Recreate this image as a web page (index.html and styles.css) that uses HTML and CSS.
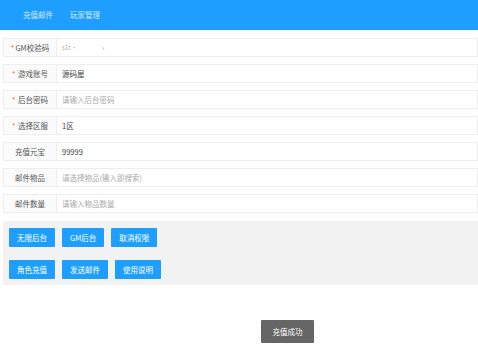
FILE: index.html
```html
<!DOCTYPE html>
<html lang="zh-CN">
<head>
    <meta charset="UTF-8">
    <meta name="viewport" content="width=device-width, initial-scale=1.0">
    <title>GM后台</title>
    <link rel="stylesheet" href="styles.css">
</head>
<body>
    <div class="header">
        <ul class="nav">
            <li>充值邮件</li>
            <li>玩家管理</li>
        </ul>
    </div>

    <form class="gm-form">
        <div class="form-item">
            <label class="form-label"><span class="req">*</span>GM校验码</label>
            <div class="form-input masked">s1c· &nbsp; &nbsp; &nbsp; &nbsp; &nbsp; &nbsp; &nbsp; &nbsp; &nbsp; ı</div>
        </div>
        <div class="form-item">
            <label class="form-label"><span class="req">*</span> 游戏账号</label>
            <div class="form-input">源码屋</div>
        </div>
        <div class="form-item">
            <label class="form-label"><span class="req">*</span> 后台密码</label>
            <div class="form-input placeholder">请输入后台密码</div>
        </div>
        <div class="form-item">
            <label class="form-label"><span class="req">*</span> 选择区服</label>
            <div class="form-input">1区</div>
        </div>
        <div class="form-item">
            <label class="form-label">充值元宝</label>
            <div class="form-input">99999</div>
        </div>
        <div class="form-item">
            <label class="form-label">邮件物品</label>
            <div class="form-input placeholder">请选择物品(输入即搜索)</div>
        </div>
        <div class="form-item">
            <label class="form-label">邮件数量</label>
            <div class="form-input placeholder">请输入物品数量</div>
        </div>

        <div class="btn-panel">
            <div class="btn-row">
                <button type="button" class="btn">无限后台</button>
                <button type="button" class="btn">GM后台</button>
                <button type="button" class="btn">取消权限</button>
            </div>
            <div class="btn-row">
                <button type="button" class="btn">角色充值</button>
                <button type="button" class="btn">发送邮件</button>
                <button type="button" class="btn">使用说明</button>
            </div>
        </div>
    </form>

    <!-- toast message -->
    <div class="toast">充值成功</div>
</body>
</html>
```

FILE: styles.css
```css
body {
    margin: 0;
    font-family: "Noto Sans CJK SC", "Noto Sans", sans-serif;
    font-size: 7.5px;
    color: #333;
    background: #fff;
}

.header {
    height: 30px;
    background-color: #1E9FFF;
}

.nav {
    display: flex;
    gap: 17px;
    margin: 0;
    padding: 0 0 0 23px;
    list-style: none;
}

.nav li {
    line-height: 30px;
    color: rgba(255, 255, 255, 0.8);
}

.gm-form {
    padding: 8px 0 0 3px;
}

.form-item {
    display: flex;
    height: 19px;
    margin-bottom: 7px;
}

.form-label {
    width: 54px;
    box-sizing: border-box;
    border: 1px solid #eee;
    background-color: #fbfbfb;
    text-align: center;
    line-height: 17px;
    color: #555;
}

.req {
    color: #FF5722;
    margin-right: 1px;
}

.form-input {
    flex: 1;
    border: 1px solid #eee;
    border-left: none;
    padding-left: 5px;
    line-height: 17px;
    color: #444;
}

.form-input.placeholder {
    color: #aaa;
}

.form-input.masked {
    color: #aaa;
    font-size: 6px;
}

.btn-panel {
    margin-top: 8px;
    padding: 7px 6px 6px;
    background-color: #f2f2f2;
}

.btn-row {
    display: flex;
    gap: 7px;
}

.btn-row + .btn-row {
    margin-top: 13px;
}

.btn {
    height: 19px;
    padding: 0 8px;
    border: none;
    border-radius: 1px;
    background-color: #1E9FFF;
    color: #fff;
    font-family: inherit;
    font-size: 7.5px;
    cursor: pointer;
}

.toast {
    position: absolute;
    left: 261px;
    top: 320px;
    width: 53px;
    height: 23px;
    line-height: 23px;
    text-align: center;
    background-color: #666;
    color: #fff;
    font-size: 7.5px;
    border-radius: 1px;
}
```
